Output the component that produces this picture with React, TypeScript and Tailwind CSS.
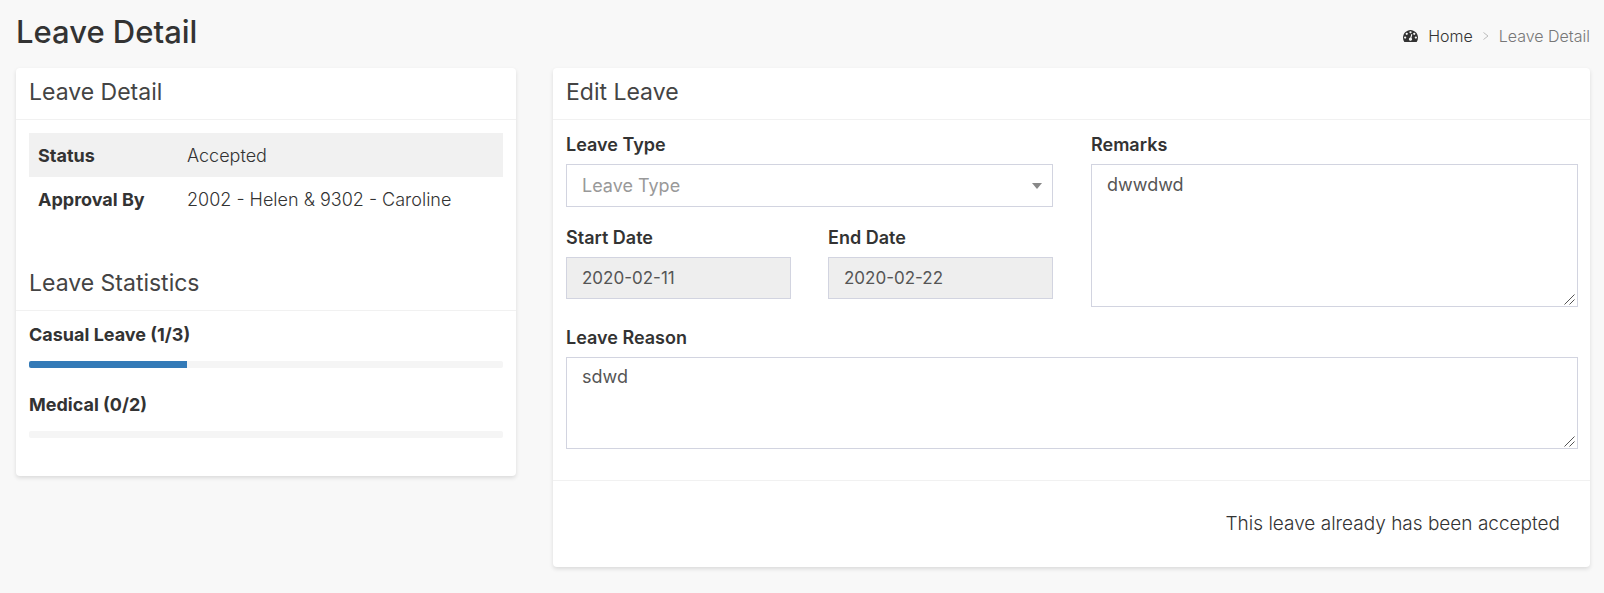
import type { ReactNode } from "react";

function GaugeIcon() {
  return (
    <svg viewBox="0 256 1792 1408" className="h-3 w-[15px] fill-[#333]" aria-hidden="true">
      <path d="M384 1152q0-53-37.5-90.5t-90.5-37.5-90.5 37.5-37.5 90.5 37.5 90.5 90.5 37.5 90.5-37.5 37.5-90.5zm192-448q0-53-37.5-90.5t-90.5-37.5-90.5 37.5-37.5 90.5 37.5 90.5 90.5 37.5 90.5-37.5 37.5-90.5zm428 481l101-382q6-26-7.5-48.5t-38.5-29.5-48 6.5-30 39.5l-101 382q-60 5-107 43.5t-63 98.5q-20 77 20 146t117 89 146-20 89-117q16-60-6-117t-72-91zm660-33q0-53-37.5-90.5t-90.5-37.5-90.5 37.5-37.5 90.5 37.5 90.5 90.5 37.5 90.5-37.5 37.5-90.5zm-640-640q0-53-37.5-90.5t-90.5-37.5-90.5 37.5-37.5 90.5 37.5 90.5 90.5 37.5 90.5-37.5 37.5-90.5zm448 192q0-53-37.5-90.5t-90.5-37.5-90.5 37.5-37.5 90.5 37.5 90.5 90.5 37.5 90.5-37.5 37.5-90.5zm320 448q0 261-141 483-19 29-54 29h-1402q-35 0-54-29-141-221-141-483 0-182 71-348t191-286 286-191 348-71 348 71 286 191 191 286 71 348z" />
    </svg>
  );
}

function Card({ className = "", children }: { className?: string; children: ReactNode }) {
  return (
    <section className={`rounded bg-white shadow-[0_2px_4px_rgba(0,0,0,0.12)] ${className}`}>
      {children}
    </section>
  );
}

function CardTitle({ children }: { children: ReactNode }) {
  return (
    <h2 className="border-b border-[#f1f1f1] px-[13px] pt-2 pb-[11px] text-[23px] leading-8 font-normal text-[#444]">
      {children}
    </h2>
  );
}

function Statistic({ name, used, total }: { name: string; used: number; total: number }) {
  const label = `${name} (${used}/${total})`;
  return (
    <div className="mb-[25px]">
      <div className="leading-6 font-bold">{label}</div>
      <div
        role="progressbar"
        aria-label={label}
        aria-valuenow={used}
        aria-valuemin={0}
        aria-valuemax={total}
        className="mt-[14px] h-[7px] overflow-hidden rounded-xs bg-[#f5f5f5]"
      >
        <div className="h-full bg-[#337ab7]" style={{ width: `${(used / total) * 100}%` }} />
      </div>
    </div>
  );
}

function Field({ id, label, children }: { id: string; label: string; children: ReactNode }) {
  return (
    <div className="flex flex-col">
      <label htmlFor={id} className="mb-[7px] text-[18px] leading-6 font-semibold">
        {label}
      </label>
      {children}
    </div>
  );
}

const inputClass = "block w-full border border-[#d2d4e0] px-[15px] font-normal text-[#555] outline-none";

function TextArea({ id, value, className }: { id: string; value: string; className: string }) {
  return (
    <div className="relative">
      <textarea
        id={id}
        defaultValue={value}
        className={`${inputClass} resize-y bg-white text-[18px] leading-6 [&::-webkit-resizer]:hidden ${className}`}
      />
      <svg
        viewBox="0 0 11 11"
        className="pointer-events-none absolute right-[3px] bottom-[2px] h-[11px] w-[11px] fill-none stroke-[#555]"
        aria-hidden="true"
      >
        <path d="M.5 10.5l10-10M5.5 10.5l5-5" />
      </svg>
    </div>
  );
}

export default function App() {
  return (
    <div className="min-h-screen bg-[#f8f8f8] pr-[14px] pb-[26px] pl-4 font-['Inter','Liberation_Sans',sans-serif] text-[18px] font-light text-[#333]">
      <header className="flex items-center justify-between pt-3 pb-4">
        <h1 className="text-[31px] leading-10 font-medium">Leave Detail</h1>
        <nav aria-label="Breadcrumb" className="flex items-center pt-2 text-base leading-6">
          <GaugeIcon />
          <a href="#" className="ml-[10px] text-[#333]">
            Home
          </a>
          <svg viewBox="0 0 6 8" className="mx-[10px] h-2 w-[6px] fill-none stroke-[#bbb]" aria-hidden="true">
            <path d="M.5.5 5 4 .5 7.5" />
          </svg>
          <span className="text-[#777]">Leave Detail</span>
        </nav>
      </header>

      <main className="grid grid-cols-3 items-start gap-[37px]">
        <Card>
          <CardTitle>Leave Detail</CardTitle>
          <div className="px-[13px] pt-[13px] pb-[38px]">
            <table className="w-full text-left">
              <tbody>
                <tr className="h-11 bg-[#f1f1f1]">
                  <th className="w-[149px] pl-[9px] font-bold">Status</th>
                  <td className="pl-[9px]">Accepted</td>
                </tr>
                <tr className="h-11">
                  <th className="w-[149px] pl-[9px] font-bold">Approval By</th>
                  <td className="pl-[9px]">2002 - Helen &amp; 9302 - Caroline</td>
                </tr>
              </tbody>
            </table>
          </div>
          <CardTitle>Leave Statistics</CardTitle>
          <div className="px-[13px] pt-3 pb-[13px]">
            <Statistic name="Casual Leave" used={1} total={3} />
            <Statistic name="Medical" used={0} total={2} />
          </div>
        </Card>

        <Card className="col-span-2">
          <CardTitle>Edit Leave</CardTitle>
          <form>
            <div className="grid grid-cols-2 gap-x-[38px] pt-[13px] pr-3 pb-[31px] pl-[13px]">
              <div className="flex flex-col gap-[19px]">
                <Field id="leave-type" label="Leave Type">
                  <div className="relative">
                    <select
                      id="leave-type"
                      defaultValue=""
                      className="h-[43px] w-full appearance-none border border-[#d2d4e0] bg-white px-[15px] text-[18px] font-normal text-[#999] outline-none"
                    >
                      <option value="">Leave Type</option>
                    </select>
                    <svg
                      viewBox="0 0 10 6"
                      className="pointer-events-none absolute top-[19px] right-[11px] h-[6px] w-[10px] fill-[#888]"
                      aria-hidden="true"
                    >
                      <path d="M0 0h10L5 6z" />
                    </svg>
                  </div>
                </Field>
                <div className="grid grid-cols-2 gap-x-[37px]">
                  <Field id="start-date" label="Start Date">
                    <input id="start-date" readOnly defaultValue="2020-02-11" className={`${inputClass} h-[42px] bg-[#eee] text-[17px]`} />
                  </Field>
                  <Field id="end-date" label="End Date">
                    <input id="end-date" readOnly defaultValue="2020-02-22" className={`${inputClass} h-[42px] bg-[#eee] text-[17px]`} />
                  </Field>
                </div>
              </div>
              <Field id="remarks" label="Remarks">
                <TextArea id="remarks" value="dwwdwd" className="h-[143px] py-2" />
              </Field>
              <div className="col-span-2 mt-[19px]">
                <Field id="reason" label="Leave Reason">
                  <TextArea id="reason" value="sdwd" className="h-[92px] py-[7px]" />
                </Field>
              </div>
            </div>
            <p className="border-t border-[#f1f1f1] px-[30px] pt-[31px] pb-[31px] text-right text-[19px] leading-6">
              This leave already has been accepted
            </p>
          </form>
        </Card>
      </main>
    </div>
  );
}
